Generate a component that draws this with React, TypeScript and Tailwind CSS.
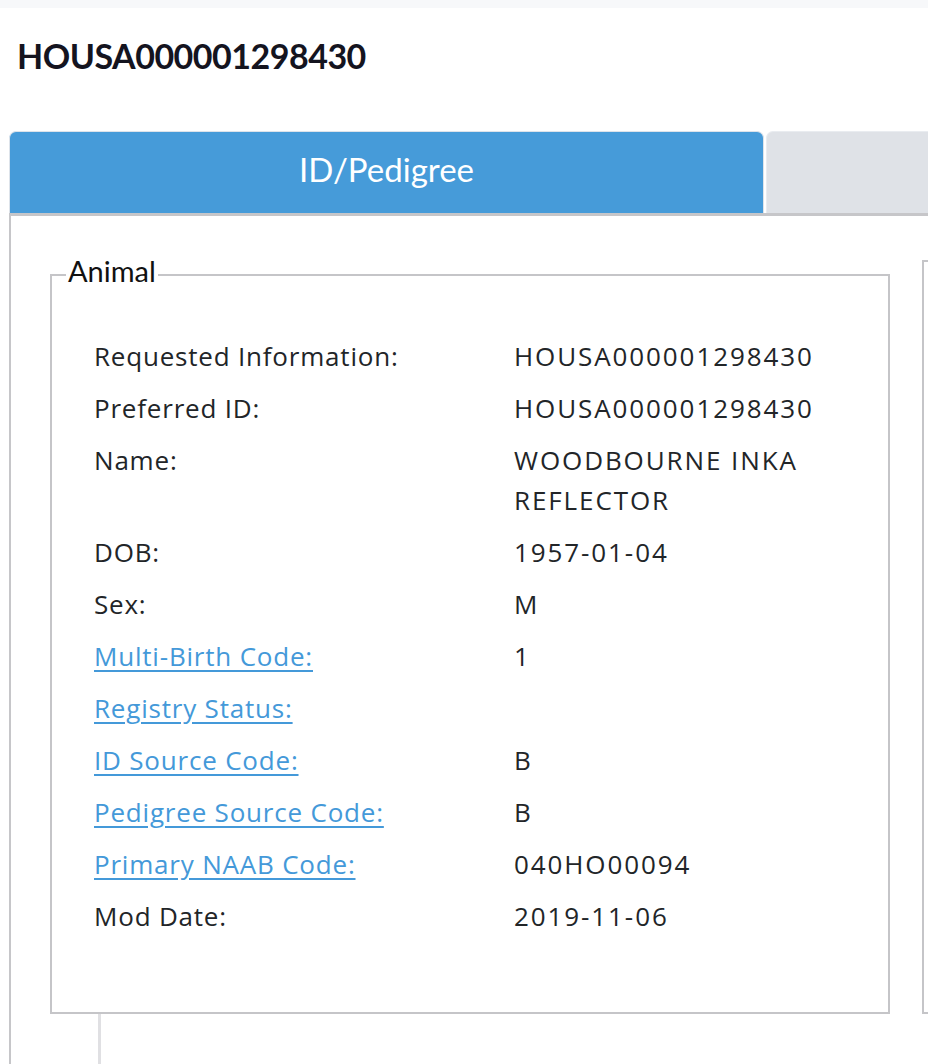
import React from 'react';

type Row = {
  label: string;
  value: string;
  link?: boolean;
};

const rows: Row[] = [
  { label: 'Requested Information:', value: 'HOUSA000001298430' },
  { label: 'Preferred ID:', value: 'HOUSA000001298430' },
  { label: 'Name:', value: 'WOODBOURNE INKA REFLECTOR' },
  { label: 'DOB:', value: '1957-01-04' },
  { label: 'Sex:', value: 'M' },
  { label: 'Multi-Birth Code:', value: '1', link: true },
  { label: 'Registry Status:', value: '', link: true },
  { label: 'ID Source Code:', value: 'B', link: true },
  { label: 'Pedigree Source Code:', value: 'B', link: true },
  { label: 'Primary NAAB Code:', value: '040HO00094', link: true },
  { label: 'Mod Date:', value: '2019-11-06' },
];

export default function App() {
  return (
    <div className="h-[1064px] w-full overflow-hidden bg-white font-['Lato',sans-serif] text-[#222528]">
      {/* top strip */}
      <div className="h-2 bg-[#f7f8fa]" />

      <h1 className="pl-[17px] pt-[26px] text-[34px] font-bold leading-[44px] tracking-[-0.5px] text-[#14141f]">
        HOUSA000001298430
      </h1>

      {/* tabs */}
      <div className="mt-[53px] flex pl-[9px]">
        <div className="flex h-[82px] w-[755px] shrink-0 items-center justify-center rounded-t-[7px] border-x border-t border-[#dde3ea] bg-[#469bd9] pb-[6px] text-[33px] text-white">
          ID/Pedigree
        </div>
        <div className="ml-[2px] h-[82px] w-[300px] shrink-0 rounded-t-[7px] border-x border-t border-[#e9ecf0] bg-[#dfe2e7]" />
      </div>

      {/* panel */}
      <div className="ml-[9px] h-full border-l-2 border-t-[3px] border-[#c6c6c9] pl-[39px] pt-[44px]">
        <div className="flex gap-[32px]">
          <fieldset className="w-[840px] shrink-0 border-2 border-[#c5c5c8] pb-[76px] pl-[42px] pt-[46px]">
            <legend className="-ml-[28px] px-[2px] text-[29px] leading-[30px] text-[#111]">
              <span className="relative -top-[4px]">Animal</span>
            </legend>
            <div className="grid grid-cols-[420px_340px] gap-y-[12px] font-['Open_Sans',sans-serif] text-[26px] leading-[40px]">
              {rows.map((row) => (
                <React.Fragment key={row.label}>
                  <div className="tracking-[0.8px]">
                    {row.link ? (
                      <a href="#" className="text-[#4499d9] underline underline-offset-[4px]">
                        {row.label}
                      </a>
                    ) : (
                      row.label
                    )}
                  </div>
                  <div className="tracking-[1.9px]">{row.value}</div>
                </React.Fragment>
              ))}
            </div>
          </fieldset>
          <fieldset className="w-[840px] shrink-0 border-2 border-[#c5c5c8]" />
        </div>
        <div className="ml-[48px] h-[200px] w-[3px] bg-[#e0e0e3]" />
      </div>
    </div>
  );
}
